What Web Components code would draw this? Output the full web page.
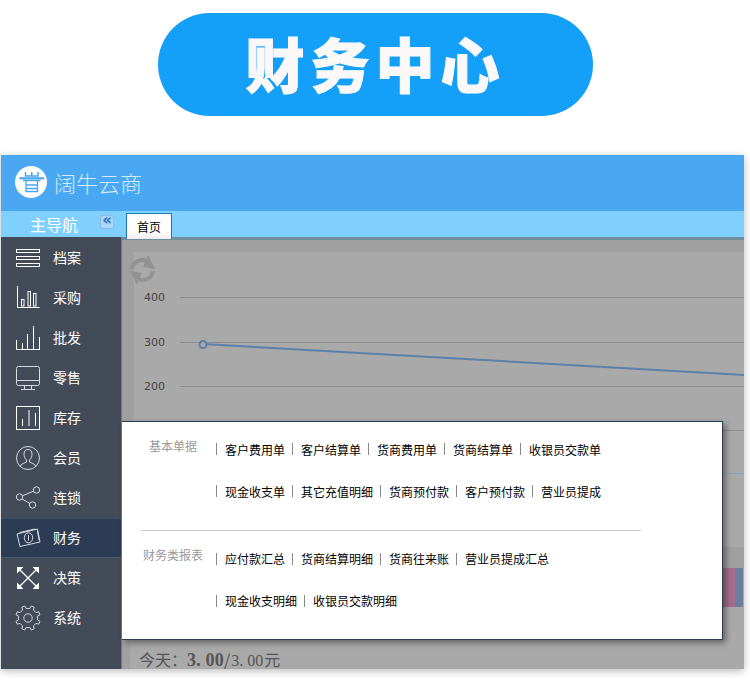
<!DOCTYPE html>
<html lang="zh">
<head>
<meta charset="UTF-8">
<title>财务中心</title>
<style>
  html, body { margin: 0; padding: 0; height: 688px; overflow: hidden; background: #fff; }
  body { font: 12px "Noto Sans CJK SC", "Liberation Sans", sans-serif; display: flex; flex-direction: column; }
</style>
</head>
<body>
<title-pill>财务中心</title-pill>
<app-window>
  <top-bar slot="top" name="阔牛云商"></top-bar>
  <nav-strip slot="nav" title-text="主导航" tab="首页"></nav-strip>
  <side-menu slot="side">
    <menu-item icon="lines">档案</menu-item>
    <menu-item icon="bars">采购</menu-item>
    <menu-item icon="ticks">批发</menu-item>
    <menu-item icon="monitor">零售</menu-item>
    <menu-item icon="box">库存</menu-item>
    <menu-item icon="user">会员</menu-item>
    <menu-item icon="share">连锁</menu-item>
    <menu-item icon="money" active>财务</menu-item>
    <menu-item icon="arrows">决策</menu-item>
    <menu-item icon="gear">系统</menu-item>
  </side-menu>
  <dash-board slot="main">
    <finance-popup slot="popup">
      <link-group label="基本单据">
        <link-row items="客户费用单,客户结算单,货商费用单,货商结算单,收银员交款单"></link-row>
        <link-row items="现金收支单,其它充值明细,货商预付款,客户预付款,营业员提成"></link-row>
      </link-group>
      <link-group label="财务类报表">
        <link-row items="应付款汇总,货商结算明细,货商往来账,营业员提成汇总"></link-row>
        <link-row items="现金收支明细,收银员交款明细"></link-row>
      </link-group>
    </finance-popup>
  </dash-board>
</app-window>

<script>
  // 8 tooth gear outline around 13,13
  function gearPath() {
    let d = '';
    for (let i = 0; i < 8; i++) {
      const a = i * Math.PI / 4 - Math.PI / 8;
      const pts = [[9.6, a - .2], [12.4, a - .13], [12.4, a + .13], [9.6, a + .2]];
      pts.forEach(([r, t], n) => {
        const x = (13 + r * Math.cos(t)).toFixed(2), y = (13 + r * Math.sin(t)).toFixed(2);
        d += (i === 0 && n === 0 ? 'M' : n === 0 ? 'A9.6 9.6 0 0 1 ' : 'L') + x + ' ' + y;
      });
    }
    return d + 'A9.6 9.6 0 0 1 ' + (13 + 9.6 * Math.cos(-Math.PI / 8 - .2)).toFixed(2) + ' ' + (13 + 9.6 * Math.sin(-Math.PI / 8 - .2)).toFixed(2) + 'Z';
  }

  const ICONS = {
    lines: '<rect x="1.5" y="4.5" width="23" height="3"/><rect x="1.5" y="11.5" width="23" height="3"/><rect x="1.5" y="18.5" width="23" height="3"/>',
    bars: '<path d="M2.5 1v21.500H24.500"/><rect x="6.500" y="14.500" width="2.500" height="6.500"/><rect x="13" y="6.500" width="2.500" height="14.500"/><rect x="18.500" y="8.500" width="2.500" height="12.500"/>',
    ticks: '<path d="M1.500 15v9.500H25M7.500 18v6.500M12.500 9v15.500M18.500 1v23.500M24.500 12v12.500"/>',
    monitor: '<rect x="1.500" y="1.500" width="23" height="19" rx="2"/><path d="M1.500 15.500h23M9.500 20.500v4M16.500 20.500v4M6 24.500h14"/>',
    box: '<rect x="1.500" y="1.500" width="23" height="23"/><path d="M7.500 14v7M14 5v16M20.500 8v13"/>',
    user: '<circle cx="13" cy="13" r="11.500"/><path d="M5 21.500c1-3 5-3.500 6.500-4.500v-2c-2-2-2.500-3.500-2.500-6 0-3 1.500-4.500 4-4.500s4 1.500 4 4.500c0 2.500-.5 4-2.500 6v2c1.500 1 5.500 1.500 6.500 4.500"/>',
    share: '<circle cx="4.500" cy="12" r="3.200"/><circle cx="21.500" cy="5" r="3.200"/><circle cx="17.500" cy="20" r="3.200"/><path d="M7.500 10.800 18.500 6.200M7 14 15 18.500"/>',
    money: '<path d="M2 9 22.500 4 25 17 5 21.500Z"/><path d="M4.500 7.500 20 4M22.500 6 24 15"/><ellipse cx="13.500" cy="12.800" rx="4.200" ry="5"/><path d="M13.500 10v5.500"/>',
    arrows: '<path d="M4 4 22 22M22 4 4 22" stroke-width="1.300"/><path fill="#fff" stroke="none" d="M2 2h6.500L2 8.500ZM24 2v6.500L17.500 2ZM2 24v-6.500L8.500 24ZM24 24h-6.500L24 17.500Z"/>',
    gear: '<path d="' + gearPath() + '"/><circle cx="13" cy="13" r="4.200"/>'
  };

  // small helper: every element gets an open shadow root with its own style + markup
  function define(tag, css, html) {
    customElements.define(tag, class extends HTMLElement {
      constructor() {
        super();
        this.attachShadow({mode: 'open'});
      }
      connectedCallback() {
        const body = typeof html === 'function' ? html(this) : html;
        this.shadowRoot.innerHTML = `<style>${css}</style>${body}`;
      }
    });
  }

  define('title-pill', `
    :host { display: flex; align-items: center; justify-content: center; flex: none;
      width: 435px; height: 103px; margin: 13px 0 0 158px; border-radius: 52px;
      background: #149ff8; color: #faf8f8; }
    span { font: 900 59px/1 "Noto Sans CJK SC", sans-serif; letter-spacing: 6px; position: relative; top: -2px; -webkit-text-stroke: 1px #faf8f8; }
  `, `<span><slot></slot></span>`);

  define('app-window', `
    :host { display: grid; flex: none; grid-template: 56px 26px 432px / 120px 623px;
      width: 743px; margin: 39px 0 0 1px; box-shadow: 0 2px 8px rgba(0,0,0,.28); }
  `, `<slot name="top"></slot><slot name="nav"></slot><slot name="side"></slot><slot name="main"></slot>`);

  define('top-bar', `
    :host { display: flex; align-items: center; grid-column: 1 / 3; background: #4aa8f2; padding-left: 14px; gap: 7px; height: 56px; }
    span { font: 300 22px/1 "Noto Sans CJK SC", sans-serif; color: #d5ebfb; position: relative; top: -1px; }
    svg { display: block; position: relative; top: -1px; }
  `, el => `
    <svg width="32" height="32" viewBox="0 0 32 32">
      <circle cx="16" cy="16" r="16" fill="#fff"/>
      <g fill="none" stroke="#4aa8f2">
        <path stroke-width="1.500" d="M10.500 6v4h12.500V6M16.700 6v4"/>
        <path stroke-width="2.200" d="M4.500 12.300h24.500"/>
        <path stroke-width="1.300" d="M8 14.500h17.500M11 15v10.500h11.500V15M11 19h11.500M11 22.500h11.500"/>
      </g>
    </svg>
    <span>${el.getAttribute('name')}</span>`);

  define('nav-strip', `
    :host { display: flex; grid-column: 1 / 3; background: #80d0fe; height: 26px; position: relative; z-index: 2; }
    .head { display: flex; align-items: center; width: 125px; flex: none; }
    .name { width: 99px; text-align: center; color: #fff; font-size: 16px; line-height: 26px; padding-left: 7px; box-sizing: border-box; }
    .fold { width: 14px; height: 14px; box-sizing: border-box; border: 1px solid #8fb8e4; border-radius: 3px; background: #a9d8fb; color: #2f6fc0;
      font: 700 15px/9px "DejaVu Sans", sans-serif; text-align: center; margin-top: -4px; }
    .tab { width: 46px; height: 26px; margin-top: 2px; box-sizing: border-box; border: 1px solid #1f7aa6; border-bottom: 0; background: linear-gradient(#fff 70%, #eee);
      color: #000; text-align: center; font-size: 12px; line-height: 25px; }
  `, el => `
    <div class="head"><div class="name">${el.getAttribute('title-text')}</div><div class="fold">«</div></div>
    <div class="tab">${el.getAttribute('tab')}</div>`);

  define('side-menu', `
    :host { display: flex; flex-direction: column; background: #434a58; padding-top: 1px; }
  `, `<slot></slot>`);

  define('menu-item', `
    :host { display: flex; align-items: center; height: 40px; padding-left: 14px; gap: 12px; color: #fff; font-size: 14px; box-sizing: border-box; }
    :host([active]) { background: #2c3c54; border-top: 1px solid #3a4f68; border-bottom: 1px solid #4c5a6e; }
    span { position: relative; top: -1px; }
    svg { display: block; fill: none; stroke: #fff; stroke-width: 1; flex: none; }
    :host([icon="money"]) svg, :host([icon="gear"]) svg, :host([icon="user"]) svg, :host([icon="monitor"]) svg, :host([icon="share"]) svg { stroke: #d8dade; }
  `, el => `<svg width="26" height="26" viewBox="0 0 26 26">${ICONS[el.getAttribute('icon')]}</svg><span><slot></slot></span>`);

  define('dash-board', `
    :host { display: flex; flex-direction: column; position: relative; background: #a9a9a9; border-left: 1px solid #5a7f92; min-width: 0; height: 432px; box-sizing: border-box; }
    .rule { height: 3px; flex: none; background: #6f8f9f; }
    .chart { height: 307px; flex: none; background: #9f9f9f; padding: 12px 0 0 12px; box-sizing: border-box; }
    .panel { height: 295px; background: #a9a9a9; position: relative; }
    svg { display: block; position: absolute; left: -12px; top: 0; }
    text { font: 11px "DejaVu Sans", sans-serif; fill: #444; }
    .band { height: 21px; flex: none; background: #9f9f9f; }
    .legend { height: 39px; flex: none; display: flex; justify-content: flex-end; }
    .legend i { display: block; }
    .legend i:nth-child(1) { width: 13px; background: #a36f8c; }
    .legend i:nth-child(2) { width: 8px; background: #6d7e9b; }
    .legend i:nth-child(3) { width: 1px; background: #8fb0e0; }
    .stats { flex: none; height: 29px; box-sizing: border-box; margin-top: 33px; padding: 9px 0 0 9px; color: #555; font-size: 16px; line-height: 20px; white-space: nowrap; border-left: 8px solid #9f9f9f; }
    .stats b { font: 700 18px/20px "Liberation Serif", serif; letter-spacing: .2px; }
    .stats em { font: 16px/20px "Liberation Serif", serif; font-style: normal; margin: 0 1px 0 1px; }
  `, `
    <div class="rule"></div>
    <div class="chart"><div class="panel">
      <svg width="622" height="295" viewBox="0 0 622 295">
        <g stroke="#8c8c8c" fill="none">
          <path d="M58 45.500H622M58 90.500H622M58 134.500H622M58 178.500H622"/>
        </g>
        <path d="M58 221.500H622" stroke="#8ea0b4"/>
        <path d="M81 92 622 123" stroke="#5d80a8" stroke-width="2" fill="none"/>
        <circle cx="81" cy="92.500" r="3.500" fill="#a9a9a9" stroke="#5d80a8" stroke-width="2"/>
        <text x="22" y="49">400</text><text x="22" y="94">300</text><text x="22" y="138">200</text>
        <g fill="none" stroke="#929292" stroke-width="4">
          <path d="M10 17a10.500 10.500 0 0 1 15-8"/><path d="M31 19a10.500 10.500 0 0 1-15 8"/>
        </g>
        <path fill="#929292" d="M26 3 33 17 21 15ZM15 33 8 19 20 21Z"/>
      </svg>
    </div></div>
    <div class="band"></div>
    <div class="legend"><i></i><i></i><i></i></div>
    <div class="stats">今天：<b>3. 00</b>/<em>3. 00</em>元</div>
    <slot name="popup"></slot>
  `);

  define('finance-popup', `
    :host { position: absolute; left: 0; top: 184px; width: 601px; height: 219px; box-sizing: border-box;
      background: #fff; border: 1px solid #2b3a55; border-left: 0; box-shadow: 3px 3px 6px rgba(0,0,0,.4);
      display: flex; flex-direction: column; }
    ::slotted(link-group:first-child) { border-bottom: 1px solid #ccc; }
  `, `<slot></slot>`);

  define('link-group', `
    :host { display: grid; grid-template-columns: 94px 1fr; width: 500px; margin-left: 19px; box-sizing: border-box; padding: 6px 0 8px; height: 109px; }
    :host(:last-child) { padding-top: 7px; }
    .label { color: #999; font-size: 12px; line-height: 34px; text-align: center; width: 64px; white-space: nowrap; margin-top: 1px; }
    :host(:last-child) .label { margin-top: 0; }
    .rows { display: flex; flex-direction: column; margin-left: -19px; }
    ::slotted(link-row) { width: 520px; }
  `, el => `<div class="label">${el.getAttribute('label')}</div><div class="rows"><slot></slot></div>`);

  define('link-row', `
    :host { display: flex; align-items: center; height: 42px; flex: none; color: #000; font-size: 12px; white-space: nowrap; }
    span { display: flex; align-items: center; }
    span::before { content: ""; width: 1px; height: 12px; background: #888; margin-right: 8px; }
    span + span { margin-left: 7px; }
  `, el => el.getAttribute('items').split(',').map(t => `<span>${t}</span>`).join(''));
</script>
</body>
</html>
